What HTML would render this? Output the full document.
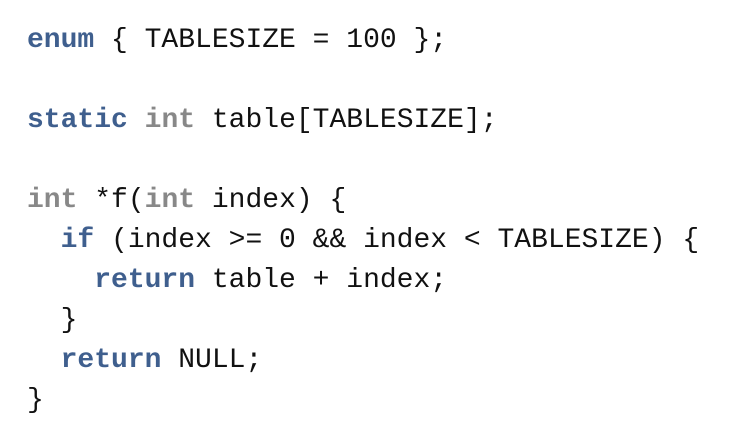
<!DOCTYPE html>
<html><head><style>
body{margin:0;background:#fff;width:746px;height:432px;overflow:hidden}
pre{margin:0;position:absolute;left:27px;top:21px;font-family:"Liberation Mono",monospace;font-size:28px;line-height:40px;color:#111}
.k{color:#3f5f8e;font-weight:bold}
.t{color:#888;font-weight:bold}
</style></head><body>
<pre><span class="k">enum</span> { TABLESIZE = 100 };

<span class="k">static</span> <span class="t">int</span> table[TABLESIZE];

<span class="t">int</span> *f(<span class="t">int</span> index) {
  <span class="k">if</span> (index &gt;= 0 &amp;&amp; index &lt; TABLESIZE) {
    <span class="k">return</span> table + index;
  }
  <span class="k">return</span> NULL;
}</pre>
</body></html>
